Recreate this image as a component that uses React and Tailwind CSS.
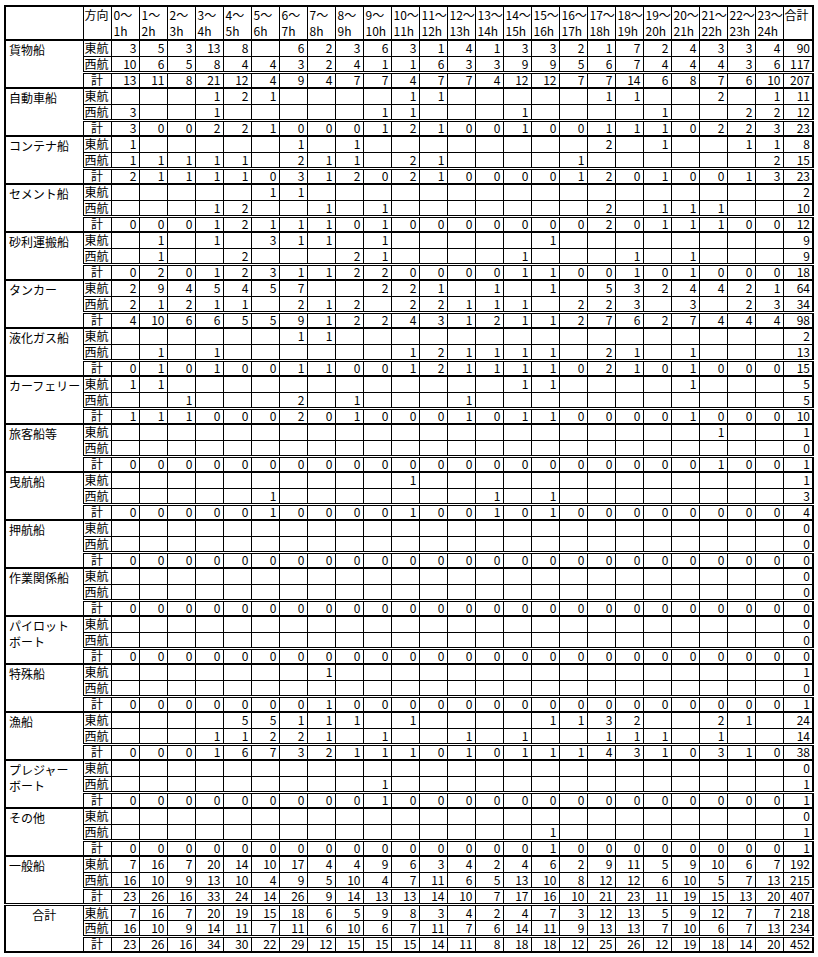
const row = (s) => s.trim().split(/\s+/).map((v) => (v === "." ? "" : v));
const sp = (m, total, fill = "") => [
  ...Array.from({ length: 24 }, (_, i) => (m[i] != null ? String(m[i]) : fill)),
  String(total),
];

const B0 = sp({}, 0);
const Z0 = sp({}, 0, "0");

const groups = [
  {
    name: ["貨物船"],
    rows: [
      row("3 5 3 13 8 . 6 2 3 6 3 1 4 1 3 3 2 1 7 2 4 3 3 4 90"),
      row("10 6 5 8 4 4 3 2 4 1 1 6 3 3 9 9 5 6 7 4 4 4 3 6 117"),
      row("13 11 8 21 12 4 9 4 7 7 4 7 7 4 12 12 7 7 14 6 8 7 6 10 207"),
    ],
  },
  {
    name: ["自動車船"],
    rows: [
      row(". . . 1 2 1 . . . . 1 1 . . . . . 1 1 . . 2 . 1 11"),
      row("3 . . 1 . . . . . 1 1 . . . 1 . . . . 1 . . 2 2 12"),
      row("3 0 0 2 2 1 0 0 0 1 2 1 0 0 1 0 0 1 1 1 0 2 2 3 23"),
    ],
  },
  {
    name: ["コンテナ船"],
    rows: [
      row("1 . . . . . 1 . 1 . . . . . . . . 2 . 1 . . 1 1 8"),
      row("1 1 1 1 1 . 2 1 1 . 2 1 . . . . 1 . . . . . . 2 15"),
      row("2 1 1 1 1 0 3 1 2 0 2 1 0 0 0 0 1 2 0 1 0 0 1 3 23"),
    ],
  },
  {
    name: ["セメント船"],
    rows: [
      sp({ 5: 1, 6: 1 }, 2),
      row(". . . 1 2 . . 1 . 1 . . . . . . . 2 . 1 1 1 . . 10"),
      row("0 0 0 1 2 1 1 1 0 1 0 0 0 0 0 0 0 2 0 1 1 1 0 0 12"),
    ],
  },
  {
    name: ["砂利運搬船"],
    rows: [
      row(". 1 . 1 . 3 1 1 . 1 . . . . . 1 . . . . . . . . 9"),
      row(". 1 . . 2 . . . 2 1 . . . . 1 . . . 1 . 1 . . . 9"),
      row("0 2 0 1 2 3 1 1 2 2 0 0 0 0 1 1 0 0 1 0 1 0 0 0 18"),
    ],
  },
  {
    name: ["タンカー"],
    rows: [
      row("2 9 4 5 4 5 7 . . 2 2 1 . 1 . 1 . 5 3 2 4 4 2 1 64"),
      row("2 1 2 1 1 . 2 1 2 . 2 2 1 1 1 . 2 2 3 . 3 . 2 3 34"),
      row("4 10 6 6 5 5 9 1 2 2 4 3 1 2 1 1 2 7 6 2 7 4 4 4 98"),
    ],
  },
  {
    name: ["液化ガス船"],
    rows: [
      sp({ 6: 1, 7: 1 }, 2),
      row(". 1 . 1 . . . . . . 1 2 1 1 1 1 . 2 1 . 1 . . . 13"),
      row("0 1 0 1 0 0 1 1 0 0 1 2 1 1 1 1 0 2 1 0 1 0 0 0 15"),
    ],
  },
  {
    name: ["カーフェリー"],
    rows: [
      sp({ 0: 1, 1: 1, 14: 1, 15: 1, 20: 1 }, 5),
      sp({ 2: 1, 6: 2, 8: 1, 12: 1 }, 5),
      row("1 1 1 0 0 0 2 0 1 0 0 0 1 0 1 1 0 0 0 0 1 0 0 0 10"),
    ],
  },
  { name: ["旅客船等"], rows: [sp({ 21: 1 }, 1), B0, sp({ 21: 1 }, 1, "0")] },
  {
    name: ["曳航船"],
    rows: [sp({ 10: 1 }, 1), sp({ 5: 1, 13: 1, 15: 1 }, 3), sp({ 5: 1, 10: 1, 13: 1, 15: 1 }, 4, "0")],
  },
  { name: ["押航船"], rows: [B0, B0, Z0] },
  { name: ["作業関係船"], rows: [B0, B0, Z0] },
  { name: ["パイロット", "ボート"], rows: [B0, B0, Z0] },
  { name: ["特殊船"], rows: [sp({ 7: 1 }, 1), B0, sp({ 7: 1 }, 1, "0")] },
  {
    name: ["漁船"],
    rows: [
      row(". . . . 5 5 1 1 1 . 1 . . . . 1 1 3 2 . . 2 1 . 24"),
      row(". . . 1 1 2 2 1 . 1 . . 1 . 1 . . 1 1 1 . 1 . . 14"),
      row("0 0 0 1 6 7 3 2 1 1 1 0 1 0 1 1 1 4 3 1 0 3 1 0 38"),
    ],
  },
  { name: ["プレジャー", "ボート"], rows: [B0, sp({ 9: 1 }, 1), sp({ 9: 1 }, 1, "0")] },
  { name: ["その他"], rows: [B0, sp({ 15: 1 }, 1), sp({ 15: 1 }, 1, "0")] },
  {
    name: ["一般船"],
    rows: [
      row("7 16 7 20 14 10 17 4 4 9 6 3 4 2 4 6 2 9 11 5 9 10 6 7 192"),
      row("16 10 9 13 10 4 9 5 10 4 7 11 6 5 13 10 8 12 12 6 10 5 7 13 215"),
      row("23 26 16 33 24 14 26 9 14 13 13 14 10 7 17 16 10 21 23 11 19 15 13 20 407"),
    ],
  },
  {
    name: ["合計"],
    total: true,
    rows: [
      row("7 16 7 20 19 15 18 6 5 9 8 3 4 2 4 7 3 12 13 5 9 12 7 7 218"),
      row("16 10 9 14 11 7 11 6 10 6 7 11 7 6 14 11 9 13 13 7 10 6 7 13 234"),
      row("23 26 16 34 30 22 29 12 15 15 15 14 11 8 18 18 12 25 26 12 19 18 14 20 452"),
    ],
  },
];

const dirs = ["東航", "西航", "計"];

export default function App() {
  return (
    <div className="min-h-screen bg-white pt-[5px] pl-[4px] text-black">
      <table className="w-[810px] table-fixed border-collapse border-2 border-black text-[12px] leading-[12px] font-['MS_Gothic','Noto_Sans_CJK_JP',sans-serif]">
        <colgroup>
          <col className="w-[78px]" />
          <col className="w-[28px]" />
          {Array.from({ length: 24 }, (_, i) => (
            <col key={i} />
          ))}
          <col className="w-[30px]" />
        </colgroup>
        <thead>
          <tr className="h-[31px]">
            <td className="border border-black p-0" />
            <td className="border border-black px-[1px] py-0 align-top leading-[16px] whitespace-nowrap">方向</td>
            {Array.from({ length: 24 }, (_, i) => (
              <td key={i} className="border border-black px-[2px] py-0 align-top leading-[16px] whitespace-nowrap">
                <div>{i}～</div>
                <div>{i + 1}h</div>
              </td>
            ))}
            <td className="border border-black px-[1px] py-0 align-top leading-[16px] whitespace-nowrap">合計</td>
          </tr>
        </thead>
        <tbody>
          {groups.map((g, gi) =>
            g.rows.map((cells, ri) => {
              const top =
                ri === 0
                  ? g.total
                    ? "border-t-[3px] border-double"
                    : "border-t-2"
                  : ri === 2
                  ? "border-t-[3px] border-double"
                  : "";
              return (
                <tr key={`${gi}-${ri}`} className="h-[16px]">
                  {ri === 0 && (
                    <td
                      rowSpan={3}
                      className={`border border-black align-top px-[3px] pt-[1px] pb-0 leading-[16px] whitespace-nowrap ${top}`}
                    >
                      {g.name.map((n, k) => (
                        <div key={k} className={g.total ? "text-center" : "text-left"}>
                          {n}
                        </div>
                      ))}
                    </td>
                  )}
                  <td
                    className={`border border-black px-[1px] py-0 whitespace-nowrap ${top} ${
                      ri === 2 ? "text-center" : "text-left"
                    }`}
                  >
                    {dirs[ri]}
                  </td>
                  {cells.map((v, ci) => (
                    <td key={ci} className={`border border-black pl-0 pr-[2px] py-0 text-right ${top}`}>
                      {v}
                    </td>
                  ))}
                </tr>
              );
            })
          )}
        </tbody>
      </table>
    </div>
  );
}
